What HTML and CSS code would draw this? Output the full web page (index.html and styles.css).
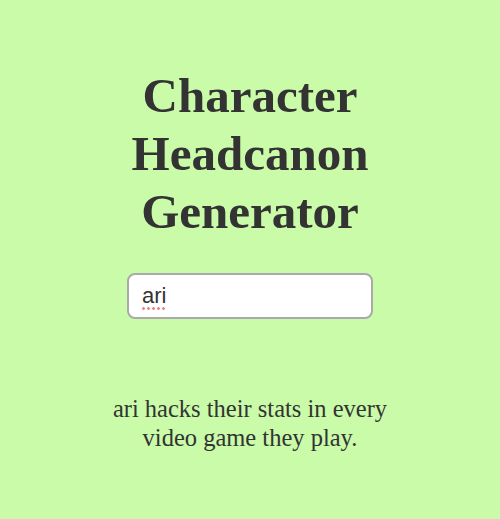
FILE: index.html
```html
<!DOCTYPE html>
<html lang="en">
<head>
  <meta charset="UTF-8" />
  <meta name="viewport" content="width=device-width, initial-scale=1.0"/>
  <title>Character Headcanon Generator</title>
  <link rel="stylesheet" href="styles.css">
</head>
<body>
  <h1>Character Headcanon Generator</h1>

  <div class="field">
    <input type="text" id="nameInput" value="ari" spellcheck="false"/>
    <span class="spell-mark"></span>
  </div>

  <p id="headcanon">ari hacks their stats in every video game they play.</p>
</body>
</html>
```

FILE: styles.css
```css
body {
  font-family: 'Liberation Serif', 'Times New Roman', serif;
  background-color: #c9fba8;
  color: #333;
  display: flex;
  flex-direction: column;
  align-items: center;
  padding: 0 2rem;
  margin: 0;
}

h1 {
  font-size: 49px;
  line-height: 58px;
  text-align: center;
  max-width: 280px;
  margin: 67px 0 32px;
}

.field {
  position: relative;
}

input {
  width: 246px;
  height: 46px;
  padding: 0 13px;
  box-sizing: border-box;
  background: #fff;
  color: #333;
  border: 2px solid #aaa;
  border-radius: 8px;
  font-family: 'Liberation Sans', Arial, sans-serif;
  font-size: 22px;
  outline: none;
}

/* red dots under the misspelled word */
.spell-mark {
  position: absolute;
  left: 14px;
  top: 34px;
  width: 26px;
  height: 3px;
  background: radial-gradient(circle, #f08080 1.1px, transparent 1.6px) repeat-x;
  background-size: 5px 3px;
}

#headcanon {
  font-size: 24.5px;
  line-height: 29px;
  text-align: center;
  max-width: 300px;
  margin: 75px 0 0;
}
```
